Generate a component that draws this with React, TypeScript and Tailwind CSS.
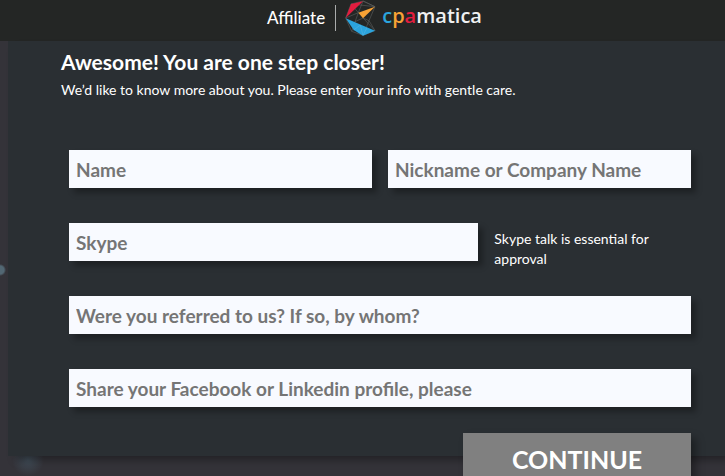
import type { InputHTMLAttributes } from 'react';
import clsx from 'clsx';

function Field({ label, className, ...rest }: { label: string; className?: string } & InputHTMLAttributes<HTMLInputElement>) {
  return (
    <input
      type="text"
      aria-label={label}
      placeholder={label}
      className={clsx(
        'h-[38px] w-full min-w-0 bg-[#f8faff] px-[7px] text-[19px] font-bold text-[#757575] placeholder:text-[#757575] shadow-[5px_5px_6px_rgba(0,0,0,0.3)] outline-none',
        className
      )}
      {...rest}
    />
  );
}

function LogoMark() {
  return (
    <svg viewBox="264 0 96 108" className="h-9 w-8" aria-hidden="true">
      {/* wire frame */}
      <g fill="none" stroke="#5c5f60" strokeWidth="1.8">
        <path d="M285 12 321 3 357 20 339 62 357 92 321 106 287 94 269 54Z" />
        <path d="M321 3 357 20M285 12 307 38 287 94M269 54 307 38M321 54 339 62 321 106M321 54 295 66M321 3 307 38M321 54 357 92M285 12 357 20" />
      </g>
      <path fill="#e31d3f" d="M269 54 285 12 321 4Z" />
      <path fill="#f7a235" d="M307 38 357 20 321 55Z" />
      <path fill="#2ba4dd" d="M269 55 357 92 321 107 293 90Z" />
      <path fill="none" stroke="#75bde0" strokeWidth="1" d="M293 90 313 75 321 106 333 83" />
    </svg>
  );
}

function Header() {
  return (
    <header className="flex h-[41px] items-start justify-center bg-[#242625] pl-6">
      <span className="pt-[6px] text-[17px] leading-6 font-medium text-white">Affiliate</span>
      <span className="mt-[5px] ml-[10px] h-[26px] w-px bg-[#aaacac]" />
      <a href="#" className="ml-2 flex items-start">
        <LogoMark />
        <span className="ml-[6px] pt-1 font-['Open_Sans'] text-[20px] leading-6 font-semibold text-[#f0f1f2]">
          <span className="text-[#2ba4dd]">c</span>
          <span className="text-[#f7a235]">p</span>
          <span className="text-[#e31d3f]">a</span>
          matica
        </span>
      </a>
    </header>
  );
}

export default function App() {
  return (
    <div className="h-screen overflow-hidden bg-[#343339] bg-[radial-gradient(circle_at_0_270px,#526773_0,#526773_4px,transparent_6px),radial-gradient(circle_at_28px_460px,#404c57_0,transparent_16px)] font-[Lato,sans-serif]">
      <Header />
      <main className="ml-2 h-[415px] bg-[#2a2f33] pt-[7px] pr-[34px] pl-[53px] shadow-[6px_6px_8px_-2px_rgba(0,0,0,0.35)]">
        <h1 className="text-[21px] leading-7 font-bold text-white">Awesome! You are one step closer!</h1>
        <p className="pt-1 text-[14px] leading-5 text-white">
          We’d like to know more about you. Please enter your info with gentle care.
        </p>
        <form className="mt-[50px] ml-2" onSubmit={(e) => e.preventDefault()}>
          <div className="grid gap-[35px]">
            <div className="grid grid-cols-2 gap-4">
              <Field label="Name" name="name" />
              <Field label="Nickname or Company Name" name="company" />
            </div>
            <div className="grid h-[38px] grid-cols-3 gap-4">
              <Field label="Skype" name="skype" className="col-span-2" aria-describedby="skype-note" />
              <p id="skype-note" className="pt-[6px] text-[14px] leading-5 text-white">
                Skype talk is essential for approval
              </p>
            </div>
            <Field label="Were you referred to us? If so, by whom?" name="referrer" />
            <Field label="Share your Facebook or Linkedin profile, please" name="profile" />
          </div>
          <button
            type="submit"
            className="mt-[26px] ml-auto block h-[54px] w-[228px] bg-[#808080] text-[25px] font-bold text-white shadow-[5px_5px_8px_rgba(0,0,0,0.35)]"
          >
            CONTINUE
          </button>
        </form>
      </main>
    </div>
  );
}
